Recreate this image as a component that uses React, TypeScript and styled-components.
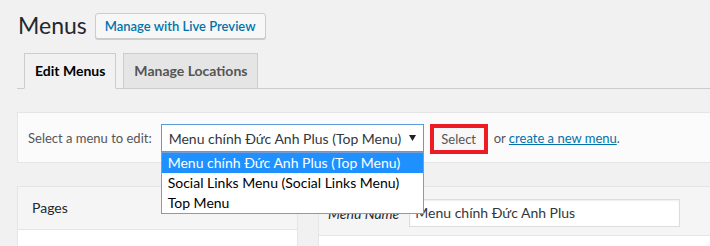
import React from "react";
import styled, { createGlobalStyle } from "styled-components";

const GlobalStyle = createGlobalStyle`
  html, body {
    margin: 0;
    padding: 0;
  }
  body {
    background: #f1f1f1;
    font-family: Lato, "Open Sans", sans-serif;
    color: #444;
    width: 710px;
    height: 246px;
    overflow: hidden;
  }
`;

const Page = styled.div`
  width: 760px;
  padding: 11px 0 0 17px;
  box-sizing: border-box;
`;

const HeaderRow = styled.div`
  display: flex;
  align-items: center;
  gap: 8px;
  padding-left: 1px;
`;

const Title = styled.h1`
  margin: 0;
  font-size: 23px;
  line-height: 29px;
  font-weight: 400;
  color: #23282d;
`;

const PreviewButton = styled.button`
  height: 26px;
  padding: 0 9px;
  font-family: inherit;
  font-size: 13px;
  font-weight: 600;
  color: #0073aa;
  background: #f7f7f7;
  border: 1px solid #ccc;
  border-radius: 3px;
  box-shadow: 0 1px 0 #ccc;
`;

const TabBar = styled.div`
  display: flex;
  align-items: flex-end;
  gap: 7px;
  height: 35px;
  margin-top: 13px;
  padding-left: 7px;
  border-bottom: 1px solid #ccc;
`;

const Tab = styled.div<{ $active?: boolean }>`
  margin-bottom: -1px;
  padding: 5px 10px;
  font-size: 14px;
  font-weight: 700;
  line-height: 24px;
  border: 1px solid #ccc;
  border-bottom-color: ${(p) => (p.$active ? "#f1f1f1" : "#ccc")};
  background: ${(p) => (p.$active ? "#f1f1f1" : "#e5e5e5")};
  color: ${(p) => (p.$active ? "#000" : "#555")};
`;

const ManagePanel = styled.div`
  display: flex;
  align-items: flex-start;
  margin-top: 23px;
  padding: 11px 10px 8px;
  background: #fbfbfb;
  border: 1px solid #e5e5e5;
  font-size: 13px;
  color: #555;
`;

const Label = styled.span`
  line-height: 28px;
  margin-right: 9px;
`;

const SelectWrap = styled.div`
  position: relative;
  width: 263px;
`;

const SelectBox = styled.div`
  display: flex;
  align-items: center;
  justify-content: space-between;
  height: 28px;
  box-sizing: border-box;
  padding: 0 7px 0 7px;
  background: #fff;
  border: 1px solid #5b9dd9;
  font-size: 14px;
  color: #32373c;
`;

const Options = styled.ul`
  position: absolute;
  top: 28px;
  left: 0;
  right: 0;
  margin: 0;
  padding: 0;
  list-style: none;
  background: #fff;
  border: 1px solid #7a9cd3;
  z-index: 5;
`;

const Option = styled.li<{ $selected?: boolean }>`
  height: 20px;
  padding-left: 6px;
  font-size: 14px;
  line-height: 20px;
  white-space: nowrap;
  background: ${(p) => (p.$selected ? "#1e90ff" : "#fff")};
  color: ${(p) => (p.$selected ? "#fff" : "#000")};
`;

const SelectButton = styled.button`
  width: 58px;
  height: 30px;
  margin-left: 6px;
  padding: 0;
  box-sizing: border-box;
  background: #f7f7f7;
  border: 4px solid #ed1c24;
  font-family: inherit;
  font-size: 13px;
  color: #555;
`;

const OrText = styled.span`
  margin-left: 6px;
  line-height: 28px;
`;

const Link = styled.a`
  color: #0073aa;
  text-decoration: underline;
`;

const Columns = styled.div`
  display: flex;
  align-items: flex-start;
  margin-top: 23px;
`;

const SideBox = styled.div`
  width: 281px;
  box-sizing: border-box;
  border: 1px solid #e5e5e5;
  background: #fff;
`;

const SideHeader = styled.div`
  height: 42px;
  padding-left: 14px;
  background: #f5f5f5;
  border-bottom: 1px solid #e5e5e5;
  font-size: 14px;
  line-height: 42px;
  color: #23282d;
`;

const SideBody = styled.div`
  height: 40px;
`;

const MainBox = styled.div`
  flex: 1;
  margin-left: 20px;
  border: 1px solid #e5e5e5;
  background: #fff;
`;

const MainHeader = styled.div`
  display: flex;
  align-items: center;
  gap: 10px;
  padding: 12px 10px 8px 9px;
  background: #f5f5f5;
  border-bottom: 1px solid #e5e5e5;
`;

const NameLabel = styled.label`
  font-size: 14px;
  font-style: italic;
  color: #23282d;
`;

const NameInput = styled.div`
  width: 271px;
  height: 28px;
  box-sizing: border-box;
  padding-left: 5px;
  background: #fff;
  border: 1px solid #ddd;
  box-shadow: inset 0 1px 2px rgba(0, 0, 0, 0.07);
  font-size: 14px;
  line-height: 26px;
  color: #32373c;
`;

const MainBody = styled.div`
  height: 40px;
`;

const menus = [
  "Menu chính Đức Anh Plus (Top Menu)",
  "Social Links Menu (Social Links Menu)",
  "Top Menu",
];

const App = () => {
  return (
    <Page>
      <GlobalStyle />
      <HeaderRow>
        <Title>Menus</Title>
        <PreviewButton>Manage with Live Preview</PreviewButton>
      </HeaderRow>

      <TabBar>
        <Tab $active>Edit Menus</Tab>
        <Tab>Manage Locations</Tab>
      </TabBar>

      <ManagePanel>
        <Label>Select a menu to edit:</Label>
        <SelectWrap>
          <SelectBox>
            <span>{menus[0]}</span>
            <svg width="7" height="6" viewBox="0 0 7 6">
              <path d="M0 0h7L3.5 6z" fill="#222" />
            </svg>
          </SelectBox>
          <Options>
            {menus.map((m, i) => (
              <Option key={m} $selected={i === 0}>
                {m}
              </Option>
            ))}
          </Options>
        </SelectWrap>
        <SelectButton>Select</SelectButton>
        <OrText>
          or <Link>create a new menu</Link>.
        </OrText>
      </ManagePanel>

      <Columns>
        <SideBox>
          <SideHeader>Pages</SideHeader>
          <SideBody />
        </SideBox>
        <MainBox>
          <MainHeader>
            <NameLabel>Menu Name</NameLabel>
            <NameInput>Menu chính Đức Anh Plus</NameInput>
          </MainHeader>
          <MainBody />
        </MainBox>
      </Columns>
    </Page>
  );
};

export default App;
